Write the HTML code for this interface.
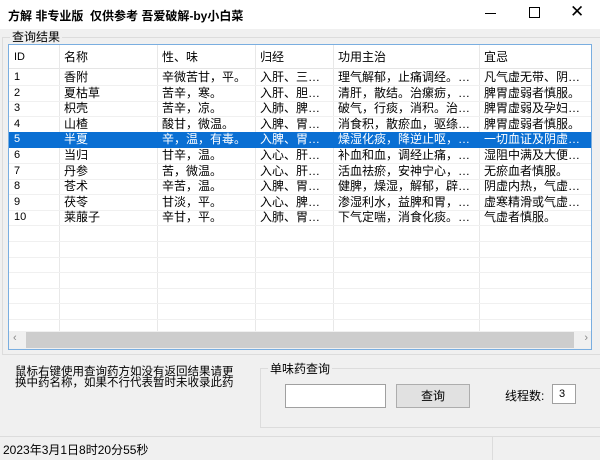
<!DOCTYPE html>
<html><head><meta charset="utf-8"><style>
*{margin:0;padding:0;box-sizing:border-box}
body{width:600px;height:460px;background:#f0f0f0;font-family:"Liberation Sans","Noto Sans CJK SC",sans-serif;font-size:12px;color:#000;position:relative;overflow:hidden}
.abs{position:absolute}
#title{left:0;top:0;width:600px;height:29px;background:#fff}
#title .t{left:8px;top:7px;font-size:12px;font-weight:bold;white-space:nowrap}
.lv{left:8px;top:44px;width:584px;height:306px;border:1px solid #7aaee0;background:#fff;overflow:hidden}
.hdr{position:absolute;left:0;top:0;height:24px;width:584px;border-bottom:1px solid #e5e5e5}
.c{position:absolute;white-space:nowrap;overflow:hidden;padding-left:5px;line-height:15.6px}
.vl{position:absolute;top:0;width:1px;height:290px;background:#e8e8e8}
.hl{position:absolute;left:0;width:584px;height:1px;background:#f0f0f0}
.row{position:absolute;left:0;width:584px;height:15.6px}
.sel{background:#0a6fd3;color:#fff}
</style></head><body>
<div id="title" class="abs"><div class="abs t">方解 非专业版&nbsp; 仅供参考 吾爱破解-by小白菜</div>
<div class="abs" style="left:485px;top:13px;width:11px;height:1px;background:#000"></div>
<div class="abs" style="left:529px;top:7px;width:11px;height:11px;border:1px solid #000"></div>
<div class="abs" style="left:570px;top:2px;font-size:17px">✕</div>
</div>
<div class="abs" style="left:2px;top:37px;width:598px;height:318px;border:1px solid #dcdcdc;border-right:none"></div>
<div class="abs" style="left:10px;top:30px;font-size:12px;background:#f0f0f0;padding:0 2px;line-height:14px">查询结果</div>
<div class="abs lv" id="lv"></div>
<div class="abs" style="left:15px;top:367px;font-size:11.5px;line-height:11px;width:226px">鼠标右键使用查询药方如没有返回结果请更换中药名称，如果不行代表暂时未收录此药</div>
<div class="abs" style="left:260px;top:368px;width:345px;height:60px;border:1px solid #dcdcdc"></div>
<div class="abs" style="left:268px;top:360px;background:#f0f0f0;padding:0 2px">单味药查询</div>
<div class="abs" style="left:285px;top:384px;width:101px;height:24px;border:1px solid #a0a0a0;background:#fff"></div>
<div class="abs" style="left:396px;top:384px;width:74px;height:24px;border:1px solid #adadad;background:#e1e1e1;text-align:center;line-height:22px">查询</div>
<div class="abs" style="left:505px;top:387px">线程数:</div>
<div class="abs" style="left:552px;top:384px;width:24px;height:20px;border:1px solid #a0a0a0;background:#fff;padding:3px 0 0 6px;font-size:11px">3</div>
<div class="abs" style="left:0;top:436px;width:600px;height:24px;border-top:1px solid #dcdcdc"></div>
<div class="abs" style="left:3px;top:441px;font-size:12px">2023年3月1日8时20分55秒</div>
<div class="abs" style="left:492px;top:437px;width:1px;height:23px;background:#dcdcdc"></div>
<script>
var lv=document.getElementById('lv');
var xs=[0,50,148,246,324,470];
var hd=['ID','名称','性、味','归经','功用主治','宜忌'];
var d=[
['1','香附','辛微苦甘，平。','入肝、三…','理气解郁，止痛调经。…','凡气虚无带、阴…'],
['2','夏枯草','苦辛，寒。','入肝、胆…','清肝，散结。治瘰疬，…','脾胃虚弱者慎服。'],
['3','枳壳','苦辛，凉。','入肺、脾…','破气，行痰，消积。治…','脾胃虚弱及孕妇…'],
['4','山楂','酸甘，微温。','入脾、胃…','消食积，散瘀血，驱绦…','脾胃虚弱者慎服。'],
['5','半夏','辛，温，有毒。','入脾、胃…','燥湿化痰，降逆止呕，…','一切血证及阴虚…'],
['6','当归','甘辛，温。','入心、肝…','补血和血，调经止痛，…','湿阻中满及大便…'],
['7','丹参','苦，微温。','入心、肝…','活血祛瘀，安神宁心，…','无瘀血者慎服。'],
['8','苍术','辛苦，温。','入脾、胃…','健脾，燥湿，解郁，辟…','阴虚内热，气虚…'],
['9','茯苓','甘淡，平。','入心、脾…','渗湿利水，益脾和胃，…','虚寒精滑或气虚…'],
['10','莱菔子','辛甘，平。','入肺、胃…','下气定喘，消食化痰。…','气虚者慎服。']];
var h='<div class="hdr"></div>';
for(var i=1;i<6;i++)h+='<div class="vl" style="left:'+xs[i]+'px"></div>';
for(var i=0;i<6;i++)h+='<div class="c" style="left:'+xs[i]+'px;top:4px;width:'+((xs[i+1]||584)-xs[i])+'px;line-height:16px'+(i==0?';font-size:11px':'')+'">'+hd[i]+'</div>';
for(var r=0;r<17;r++){var y=25+r*15.6;h+='<div class="hl" style="top:'+(y+15)+'px"></div>';
if(r<10){h+='<div class="row'+(r==4?' sel':'')+'" style="top:'+y+'px">';
for(var i=0;i<6;i++)h+='<div class="c" style="left:'+xs[i]+'px;top:0;width:'+((xs[i+1]||584)-xs[i])+'px'+(i==0?';font-size:11px':'')+'">'+d[r][i]+'</div>';
h+='</div>';}}
h+='<div style="position:absolute;left:0;top:286px;width:584px;height:18px;background:#f0f0f0"><div style="position:absolute;left:17px;top:1px;width:548px;height:16px;background:#cdcdcd"></div><div style="position:absolute;left:4px;top:1px;color:#888;font-size:11px">‹</div><div style="position:absolute;right:5px;top:1px;color:#888;font-size:11px">›</div></div>';
lv.innerHTML=h;
</script>
</body></html>
